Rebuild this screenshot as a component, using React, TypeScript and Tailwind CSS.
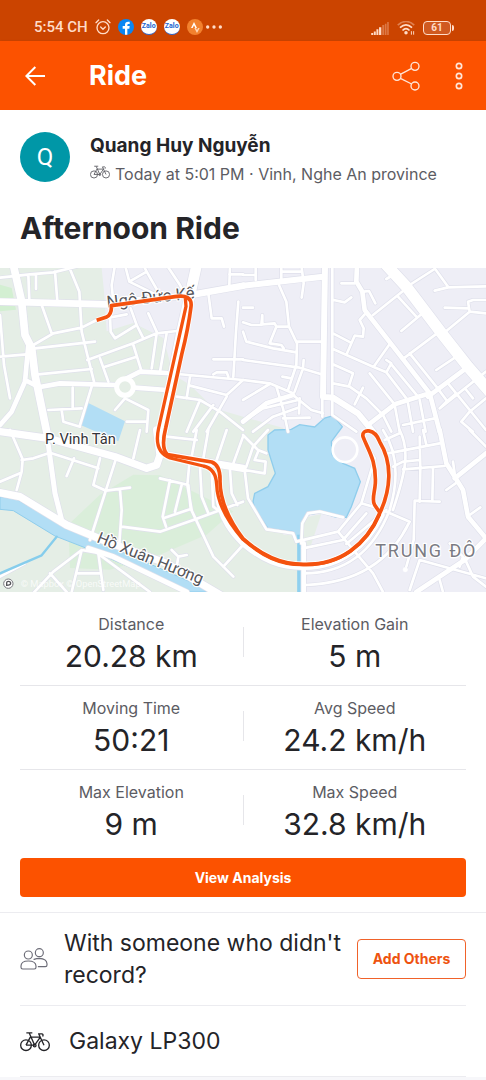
import type { ReactNode } from "react";

type Road = { x: number; y: number; width: number; d: string };

// Roads are stored per map tile, x and y are the tile's origin
const roads: Road[] = [
  // north west
  {
    x: 0,
    y: -9,
    width: 8,
    d: "M0 38 L90 28 L160 22 L250 0 M85 30 L88 105 M108 30 V72 M165 20 L172 108 M205 0 L238 80 L245 200 L262 270 L282 350 M345 0 L335 60 L340 112 M375 0 L388 50 L460 85 M388 50 L440 20 L430 0 M440 20 L480 90 M500 0 L540 60 L555 90 M0 150 L12 300 L30 400 M125 120 L155 205 M100 240 L160 205 L245 188 L290 165 L380 148 M105 250 L285 230 M0 275 L80 268 M330 150 L332 200 L345 220 L410 180 L392 130 M410 180 L430 220 M445 145 L470 200 M262 285 L400 235 L470 205 L530 198 M115 328 L275 312 M300 280 L325 350 M315 305 L410 275 M400 240 L425 320 M470 205 L455 310 M500 205 L480 320 M218 368 V430 M145 435 L245 430 M275 365 L240 480 M185 435 L190 470 L240 485 M375 400 L445 435 L440 500 M375 400 L345 435 M380 470 L440 470 M500 324 L729 345 M625 85 L635 160 L665 160 L672 185 M640 283 H729 M715 110 L708 200 L700 335 M640 328 L650 322 L680 322 L685 335 M570 335 L560 400 M530 395 L600 405 L660 440 L729 495 M570 362 L680 390 L729 345 M640 420 L580 500 M680 395 L620 500 M600 405 L560 500 M690 0 L688 60 M688 28 H729",
  },
  {
    x: 0,
    y: -9,
    width: 14,
    d: "M85 240 L75 350 L35 440 L0 480 M75 345 L120 368 M120 366 L180 355 L345 360 M405 368 L500 375 M380 340 L420 320 L500 324",
  },
  { x: 0, y: -9, width: 20, d: "M0 110 L320 118 L345 112 L560 92 L729 62" },
  { x: 0, y: -9, width: 32, d: "M590 0 L570 90 L545 200 L487 500" },
  { x: 0, y: -9, width: 23, d: "M40 0 L65 110 L75 210 L95 250 L105 330 L140 500" },
  // north east
  {
    x: 729,
    y: -9,
    width: 8,
    d: "M38 0 V45 M0 30 H38 M115 0 V42 M115 20 H175 M175 0 L182 55 L176 98 M0 128 H30 M0 172 L25 180 H55 L58 150 V178 L95 175 L100 185 H138 M100 185 L80 235 L115 240 L122 250 M0 200 L10 230 L90 250 L160 262 M108 60 L130 110 L138 185 L162 235 L160 300 L135 375 M162 230 H235 M0 285 L170 308 L235 328 M182 285 L180 310 L155 380 M118 335 L145 340 M0 345 L80 355 L150 385 M0 405 L80 357 M268 0 V450 M295 55 H335 M272 105 L305 112 L325 97 M362 80 L378 78 L397 115 M390 150 L480 78 M365 148 L350 165 L362 190 L360 215 L335 212 L312 265 M270 205 L322 232 M270 252 L390 305 L430 322 L490 400 M392 305 L438 240 M430 285 L445 295 L430 322 M445 298 L525 395 M270 298 L330 325 L318 362 M270 355 L320 365 L370 400 L420 450 M360 368 L335 418 M380 325 L450 412 M465 95 L520 155 M475 198 L535 148 M430 42 L450 30 M500 60 L575 12 M575 10 L615 65 M575 77 L615 67 L729 64 M605 128 L675 130 M729 145 L680 140 L675 110 L690 105 H729 M680 140 L610 198 M485 278 L585 203 M580 315 L640 275 M500 265 L580 365 M580 365 L610 405 M615 355 L729 495 M590 430 L729 320 M640 385 L610 410 L590 430 M670 375 L690 400 M530 405 L548 500 M495 415 L510 500 M455 420 L470 500 M420 450 L445 500 M480 480 L575 460 M655 470 L680 440 L729 400 M655 470 L690 500 M100 365 L120 430 L135 500 M0 470 L60 430 L165 405 M30 500 L90 455 L165 428 M170 400 L168 445 M150 390 L205 435 L240 445 M120 460 L200 458 M238 400 V455 M268 450 L340 500",
  },
  {
    x: 729,
    y: -9,
    width: 14,
    d: "M342 0 L340 50 L358 80 L365 135 L560 385 M560 385 L590 500 M555 395 L672 308 M375 480 L455 418 L560 385 M0 470 L70 415 L150 390",
  },
  { x: 729, y: -9, width: 18, d: "M0 62 L240 35 M246 0 L240 395 L270 398 L345 445 L390 500" },
  { x: 729, y: -9, width: 34, d: "M430 0 L490 65 L600 210 L675 305 L740 380" },
  // south west
  {
    x: 0,
    y: 486,
    width: 8,
    d: "M30 0 L68 88 L65 125 L50 180 M0 155 L60 130 M65 90 L100 85 L150 68 L295 115 M222 85 L200 138 M300 85 L280 165 L318 182 L390 173 M350 80 L270 330 M360 180 L365 240 L358 340 M365 290 L480 305 L580 270 L729 215 M420 0 L400 85 M480 145 L565 165 L572 235 L640 380 L700 440 M510 150 L488 260 L498 290 M545 165 L525 245 M490 265 L572 237 M570 80 L562 165 L575 240 M500 20 L590 30 M0 440 L75 400 M90 500 L160 425 L245 360 L290 368 L450 486 M150 430 L200 486 M245 360 L215 486 M230 430 H300 M295 370 L310 480 M600 110 L605 200 L625 250 M635 120 L640 230 L660 245 M590 0 L575 80 M625 0 L610 85 M680 0 L650 90 M729 20 L700 100 M690 120 L695 190 L712 225 M670 410 L729 345 M515 360 L535 380 L560 375 M535 380 L530 410",
  },
  { x: 0, y: 486, width: 15, d: "M145 45 L165 190 L185 270 M265 355 L340 380 L560 486" },
  {
    x: 0,
    y: 486,
    width: 22,
    d: "M0 5 L145 25 L345 80 L440 115 L470 105 L480 75 L470 0 M0 188 L60 200 L200 285 L320 335 L500 400 L670 500 M500 75 L640 100 L729 115",
  },
  // south east
  {
    x: 729,
    y: 486,
    width: 8,
    d: "M0 15 L45 60 L70 70 M75 0 L30 50 L10 110 M45 65 L35 90 L68 95 L65 130 L5 120 M5 120 L15 205 L70 298 L150 310 L160 335 L285 305 L355 220 L395 85 L360 30 M180 355 L300 330 L370 250 M185 430 C300 430 390 370 440 240 C470 140 460 60 420 0 M188 465 C330 460 440 400 500 275 M450 240 C490 120 500 60 470 0 M285 305 L390 430 L420 486 M310 342 L430 240 M355 220 L390 230 M430 245 L500 275 L480 310 M175 340 L178 280 L195 250 L230 245 L300 262 M425 30 L470 10 M435 70 L590 40 M450 110 L480 95 L530 90 M480 118 L605 108 M530 20 L532 115 L530 215 M570 115 L568 212 M590 215 L515 212 L512 330 L490 410 M540 0 L550 45 M590 450 L600 486 M530 390 L729 445 M630 95 L635 130 M610 180 L645 155 M680 255 L712 232 M665 385 L690 440 L729 470 M530 390 L500 480 M680 0 L729 50 M620 340 L660 380 L650 410",
  },
  { x: 729, y: 486, width: 18, d: "M-75 200 C-65 270 -30 310 0 340 C60 390 110 412 185 411 C290 411 370 350 416 255" },
  { x: 729, y: 486, width: 14, d: "M590 0 L610 100 L660 180 L675 260 L729 325 M635 145 L729 70 M520 486 L665 390 L729 325 M182 340 V486" },
];

const lake =
  "M824 486 L874 484 L899 470 L944 477 L974 450 L999 443 L1027 476 L994 521 L997 561 L1029 586 L1064 601 L1081 641 L1054 716 L1039 748 L1009 748 L964 733 L919 741 L904 776 L900 816 L889 816 L879 791 L804 781 L764 721 L759 701 L764 676 L804 656 L826 616 L804 546 L804 501 Z";

const route =
  "M290 157 L320 147 Q336 138 334 113 L525 86 Q578 78 573 116 Q565 180 545 260 L497 480 Q482 540 502 560 L635 582 Q662 592 660 640 Q660 720 729 812 C785 861 840 890 914 889 C1019 891 1099 831 1139 736 C1172 666 1179 586 1139 521 C1124 480 1084 481 1089 506 C1104 546 1129 576 1126 646 C1124 676 1114 696 1124 711 L1141 736";
const routeBack = "M556 90 L558 115 L530 240 L476 480 Q460 550 510 570 L610 594 Q648 602 650 650 Q652 725 729 814 C785 863 840 892 914 890 C1019 892 1099 832 1139 738";

function RideMap() {
  return (
    <svg viewBox="0 0 1458 972" className="block w-full" role="img" aria-label="Route map">
      <rect width="1458" height="972" fill="#eeeef6" />
      <path
        d="M0 0 H305 L312 70 L320 190 L400 165 L490 210 L520 320 L570 350 L640 420 L760 455 L850 480 V800 H896 V972 H0 Z"
        fill="#e5eee6"
      />
      <path d="M908 750 L964 738 L930 840 L905 850 Z" fill="#e5eee6" />
      <path d="M0 50 L35 60 L48 125 L0 130 Z" fill="#d3efd2" />
      <path d="M400 620 L480 622 L700 730 L620 800 L480 860 L330 905 L210 900 L205 770 L300 680 Z" fill="#daeeda" />
      <path d="M265 405 L375 460 L355 520 L240 470 Z" fill="#b2def5" />
      <path d={lake} fill="#b2def5" stroke="#8fcdec" strokeWidth="4" />
      <path d="M897 800 V972" stroke="#8fd0ef" strokeWidth="11" />
      <path
        d="M0 686 L50 694 L150 751 L265 806 L640 972 H560 L260 841 L165 804 L40 728 L0 724 Z"
        fill="#b2def5"
        stroke="#8fcdec"
        strokeWidth="3"
      />

      <g fill="none" strokeLinejoin="round" strokeLinecap="round">
        {roads.map((r, i) => (
          <path key={i} d={r.d} transform={`translate(${r.x} ${r.y})`} stroke="#dfe0eb" strokeWidth={r.width + 4} />
        ))}
        {roads.map((r, i) => (
          <path key={i} d={r.d} transform={`translate(${r.x} ${r.y})`} stroke="#fff" strokeWidth={r.width} />
        ))}
        <path d="M170 806 L125 862 L0 916" stroke="#86cdec" strokeWidth="7" />
        <circle cx="375" cy="357" r="25" fill="#e5eee6" stroke="#fff" strokeWidth="15" />
        <circle cx="1035" cy="545" r="37" fill="#eeeef6" stroke="#fff" strokeWidth="8" />
        <circle cx="1216" cy="905" r="7" fill="#fff" stroke="#fff" />
      </g>

      <g className="font-[Roboto,sans-serif]" stroke="#fff" strokeWidth="7" strokeLinejoin="round" paintOrder="stroke">
        <text x="322" y="119" fontSize="50" fill="#55555a" transform="rotate(-6 322 119)">
          Ngô Đức Kế
        </text>
        <text x="135" y="529" fontSize="44" fill="#333338">
          P. Vinh Tân
        </text>
        <text x="288" y="822" fontSize="48" fill="#55555a" transform="rotate(22 288 822)">
          Hồ Xuân Hương
        </text>
        <text x="1126" y="866" fontSize="54" fill="#7b7b83" className="tracking-widest">
          TRUNG ĐÔ
        </text>
      </g>

      <g fill="none" strokeLinejoin="round">
        <path d={route} stroke="#fff" strokeOpacity="0.8" strokeWidth="17" />
        <path d={routeBack} stroke="#fff" strokeOpacity="0.8" strokeWidth="17" />
        <path d={route} stroke="#f4520f" strokeWidth="11" />
        <path d={routeBack} stroke="#f4520f" strokeWidth="10" />
      </g>

      <circle cx="25" cy="947" r="14" fill="#fff" stroke="#77777d" strokeWidth="3" />
      <path d="M20 954 V944 Q20 940 25 940 Q32 940 32 946 Q32 952 20 952" fill="none" stroke="#55555a" strokeWidth="4" />
      <text x="62" y="956" fontSize="28" fill="#fff" fillOpacity="0.75" className="font-[Roboto,sans-serif]">
        © Mapbox © OpenStreetMap
      </text>
    </svg>
  );
}

function Bike({ className }: { className: string }) {
  return (
    <svg viewBox="0 0 90 62" className={className} fill="none" stroke="currentColor" strokeWidth="4" aria-hidden="true">
      <circle cx="18" cy="42" r="16" />
      <circle cx="72" cy="42" r="16" />
      <path d="M18 42 L31 18 H61 L44 42 H18 M44 42 L28 6 M19 5 H37 M72 42 L56 8 H66 Q71 9 68 16" strokeLinejoin="round" />
      <circle cx="44" cy="43" r="4" />
    </svg>
  );
}

function People() {
  return (
    <svg viewBox="0 0 84 66" className="h-[22px] w-7 shrink-0" fill="none" stroke="#6d6d78" strokeWidth="3.5" aria-hidden="true">
      <circle cx="25" cy="21" r="12" />
      <circle cx="58" cy="14" r="12" />
      <path d="M3 54 Q3 39 25 39 Q47 39 48 54 V58 Q48 63 43 63 H8 Q3 63 3 58 Z" strokeLinejoin="round" />
      <path d="M42 34 Q50 31 58 31 Q80 32 81 47 V51 Q81 56 76 56 H55" strokeLinecap="round" />
    </svg>
  );
}

function Zalo() {
  return (
    <span className="flex size-4 items-center justify-center rounded-full border-b border-[#2b62c9] bg-white text-[7px] leading-none font-bold text-[#2264d0]">
      Zalo
    </span>
  );
}

function StatusBar() {
  return (
    <div className="flex h-[41px] items-end justify-between bg-[#cb4400] pr-8 pb-[6px] pl-[34px] font-[Roboto,sans-serif] text-[#ffdcc8]">
      <div className="flex items-center gap-[7px]">
        <span className="text-[15px] leading-4 font-medium">5:54 CH</span>
        <svg viewBox="0 0 48 48" className="size-4" fill="none" stroke="currentColor" strokeWidth="4" strokeLinecap="round" aria-hidden="true">
          <circle cx="24" cy="26" r="18" />
          <path d="M3 11 L11 3 M45 11 L37 3 M17 24 L24 31 L31 24" />
        </svg>
        <svg viewBox="0 0 48 48" className="size-4" aria-hidden="true">
          <circle cx="24" cy="24" r="24" fill="#0a86f2" />
          <path d="M21 47 V29 H14 V21 H21 V17 Q21 8 31 8 H35 V15 H31 Q28 15 28 19 V21 H35 L34 29 H28 V47 Z" fill="#fff" />
        </svg>
        <Zalo />
        <Zalo />
        <div className="flex items-center gap-[3px]">
          <svg viewBox="0 0 48 48" className="size-4" aria-hidden="true">
            <circle cx="24" cy="24" r="24" fill="#f2812e" />
            <path d="M12 27 L21 9 L30 27 H25 L21 19 L17 27 Z" fill="#fff" />
            <path d="M22 27 H27 L30 33 L33 27 H38 L30 42 Z" fill="#ffd5b5" />
          </svg>
          <svg viewBox="0 0 48 12" className="h-1 w-4" fill="currentColor" aria-hidden="true">
            <circle cx="5" cy="6" r="5" />
            <circle cx="24" cy="6" r="5" />
            <circle cx="43" cy="6" r="5" />
          </svg>
        </div>
      </div>
      <div className="flex items-center gap-2">
        <svg viewBox="0 0 54 40" className="h-[13px] w-[18px]" fill="currentColor" aria-hidden="true">
          <path d="M0 34 h6 v6 h-6z M8 29 h6 v11 h-6z M16 22 h6 v18 h-6z M24 16 h7 v24 h-7z" />
          <path d="M34 9 h6 v31 h-6z M42 5 h5 v35 h-5z M49 0 h5 v40 h-5z" opacity="0.35" />
        </svg>
        <svg viewBox="0 0 56 44" className="h-[14px] w-[18px]" fill="none" stroke="currentColor" strokeWidth="5" aria-hidden="true">
          <path d="M2 13 Q28 -10 54 13" opacity="0.4" />
          <path d="M9 21 Q28 3 47 21 M17 30 Q28 18 39 30" />
          <circle cx="28" cy="37" r="3" fill="currentColor" />
          <path d="M45 32 V43 M52 32 V43" strokeWidth="3" />
        </svg>
        <div className="flex items-center gap-px">
          <span className="flex h-[14px] w-7 items-center justify-center rounded border-[1.5px] border-current bg-[#d05a20] text-[10px] leading-none font-bold">
            61
          </span>
          <span className="h-[6px] w-[2px] rounded-r bg-current" />
        </div>
      </div>
    </div>
  );
}

function Header() {
  return (
    <header className="flex h-[69px] items-center bg-[#fc5200] pr-[20px] pl-[25px] text-white shadow-sm">
      <button type="button" aria-label="Back">
        <svg viewBox="0 0 60 60" className="size-5" fill="none" stroke="currentColor" strokeWidth="6" aria-hidden="true">
          <path d="M60 30 H4 M31 3 L4 30 L31 57" />
        </svg>
      </button>
      <h1 className="ml-[44px] flex-1 text-[27px] leading-8 font-bold">Ride</h1>
      <button type="button" aria-label="Share" className="mr-8">
        <svg viewBox="0 0 84 88" className="h-[30px] w-7" fill="none" stroke="#ffe6d8" strokeWidth="4" aria-hidden="true">
          <circle cx="15" cy="45" r="12" />
          <circle cx="69" cy="15" r="12" />
          <circle cx="69" cy="74" r="12" />
          <path d="M25 39 L59 21 M25 51 L59 68" />
        </svg>
      </button>
      <button type="button" aria-label="More">
        <svg viewBox="0 0 24 84" className="h-7 w-[14px]" fill="none" stroke="#ffe6d8" strokeWidth="5" aria-hidden="true">
          <circle cx="12" cy="12" r="8" />
          <circle cx="12" cy="42" r="8" />
          <circle cx="12" cy="72" r="8" />
        </svg>
      </button>
    </header>
  );
}

const stats = [
  [
    { label: "Distance", value: "20.28 km" },
    { label: "Elevation Gain", value: "5 m" },
  ],
  [
    { label: "Moving Time", value: "50:21" },
    { label: "Avg Speed", value: "24.2 km/h" },
  ],
  [
    { label: "Max Elevation", value: "9 m" },
    { label: "Max Speed", value: "32.8 km/h" },
  ],
];

function Stat({ label, value }: { label: string; value: string }) {
  return (
    <div className="flex-1 text-center">
      <dt className="text-base leading-6 text-[#5c5c63]">{label}</dt>
      <dd className="mt-0.5 text-[30px] leading-9 text-[#242428]">{value}</dd>
    </div>
  );
}

function Row({ children }: { children: ReactNode }) {
  return <div className="mx-5 flex items-center border-b border-[#ececf0]">{children}</div>;
}

export default function App() {
  return (
    <div className="min-h-screen bg-[#f7f7fa] font-[Inter,sans-serif] text-[#242428]">
      <StatusBar />
      <Header />
      <main className="bg-white">
        <section className="px-5 pt-[22px] pb-[22px]">
          <div className="flex items-start gap-5">
            <div className="flex size-[50px] items-center justify-center rounded-full bg-[#0097a7] font-[Roboto,sans-serif] text-2xl text-white">
              Q
            </div>
            <div>
              <h2 className="text-[19px] leading-7 font-bold">Quang Huy Nguyễn</h2>
              <p className="flex items-center gap-[5px] text-base leading-7 whitespace-nowrap text-[#5c5c63]">
                <Bike className="mb-1 h-[14px] w-5" />
                Today at 5:01 PM · Vinh, Nghe An province
              </p>
            </div>
          </div>
          <h2 className="mt-[22px] text-[30px] leading-9 font-bold">Afternoon Ride</h2>
        </section>

        <RideMap />

        {/* Stats */}
        <section className="px-5 pt-2.5">
          {stats.map((row, i) => (
            <dl
              key={i}
              className="flex h-[84px] items-start border-b border-[#e6e6ea] pt-2.5 last:border-transparent"
            >
              <Stat {...row[0]} />
              <span className="mt-[15px] h-[30px] w-px bg-[#e6e6ea]" />
              <Stat {...row[1]} />
            </dl>
          ))}
        </section>
        <div className="border-b border-[#ececf0] px-5 pt-1 pb-[15px]">
          <button type="button" className="h-[39px] w-full rounded bg-[#fc5200] text-sm font-bold text-white">
            View Analysis
          </button>
        </div>

        <Row>
          <People />
          <p className="my-[14px] ml-4 flex-1 text-[23px] leading-8">With someone who didn't record?</p>
          <button
            type="button"
            className="h-10 w-[109px] rounded border-[1.5px] border-[#f0622a] text-sm font-bold text-[#ee5310]"
          >
            Add Others
          </button>
        </Row>
        <Row>
          <Bike className="h-[21px] w-[30px] shrink-0" />
          <p className="my-[19px] ml-[19px] text-[23px] leading-8">Galaxy LP300</p>
        </Row>
      </main>
    </div>
  );
}
